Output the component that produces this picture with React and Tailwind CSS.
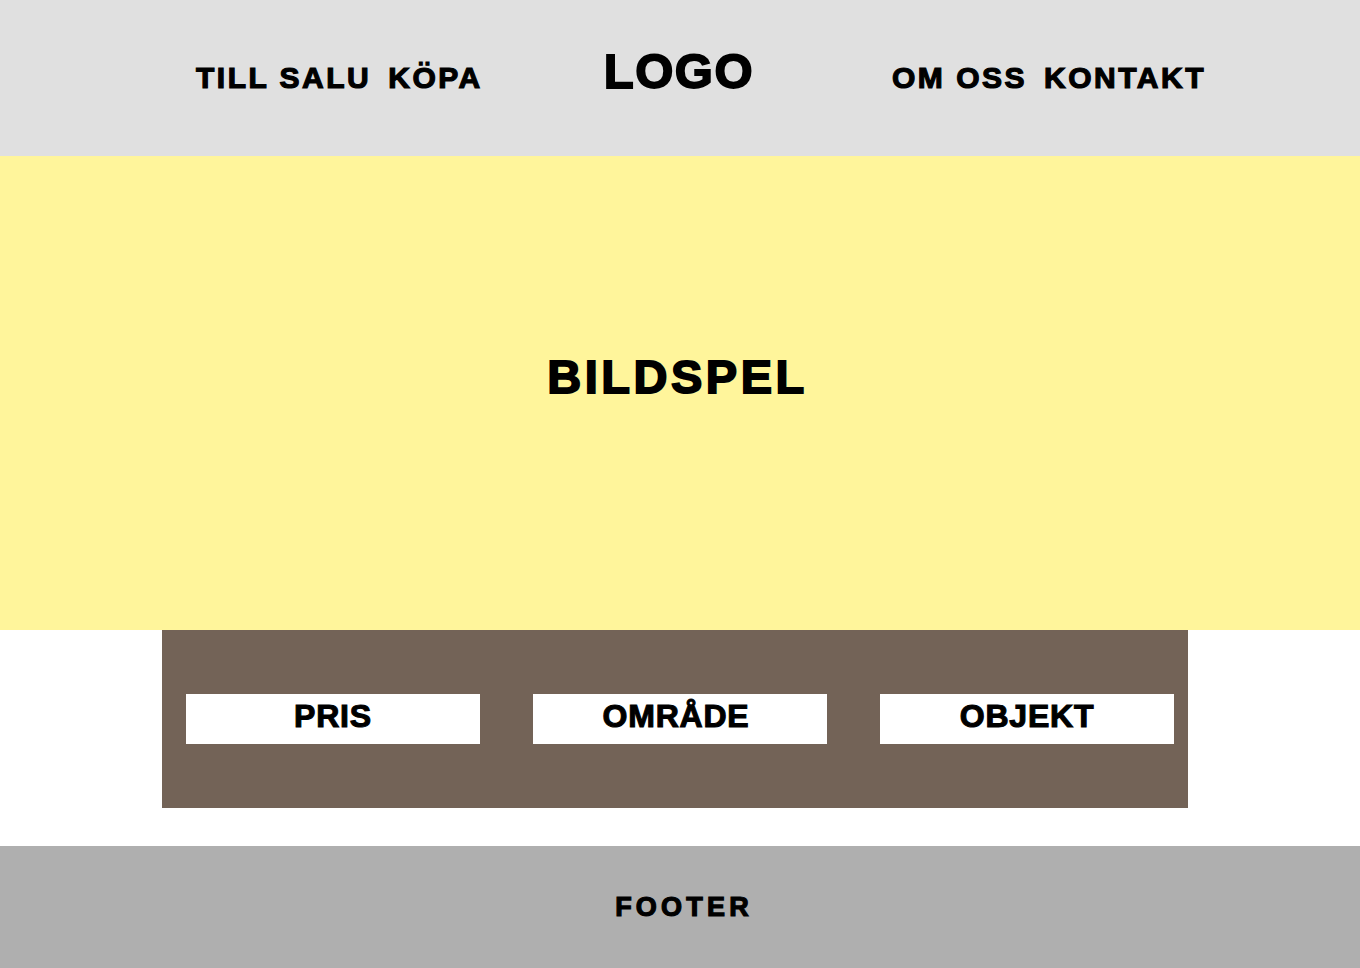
const font = "font-['Liberation_Sans',Arial,sans-serif] font-bold";

const leftLinks = ["TILL SALU", "KÖPA"];
const rightLinks = ["OM OSS", "KONTAKT"];
const filters = [
  { label: "PRIS", pad: "" },
  { label: "OMRÅDE", pad: "pr-[8px]" },
  { label: "OBJEKT", pad: "" },
];

export default function App() {
  return (
    <div className={`min-h-[968px] bg-white text-black ${font}`}>
      <header className="h-[156px] bg-[#e0e0e0] flex items-center">
        <nav className="ml-[196px] flex items-center gap-[17px] text-[30px] tracking-[2.5px] leading-none [-webkit-text-stroke:1.2px_black]">
          {leftLinks.map((l) => (
            <a key={l} href="#">
              {l}
            </a>
          ))}
        </nav>
        <a href="#" className="ml-[121px] mb-[14px] text-[49px] tracking-[1.5px] leading-none [-webkit-text-stroke:1.8px_black]">
          LOGO
        </a>
        <nav className="ml-[138px] flex items-center gap-[17px] text-[30px] tracking-[2.5px] leading-none [-webkit-text-stroke:1.2px_black]">
          {rightLinks.map((l) => (
            <a key={l} href="#">
              {l}
            </a>
          ))}
        </nav>
      </header>

      <section className="h-[474px] bg-[#fff59b] flex items-center justify-center">
        <h1 className="ml-[-5px] mb-[33px] text-[47px] tracking-[3.5px] leading-none [-webkit-text-stroke:1.8px_black]">
          BILDSPEL
        </h1>
      </section>

      <div className="mx-[162px] w-[1026px] h-[178px] bg-[#736357] flex items-center pl-[24px] gap-[53px]">
        {filters.map((f) => (
          <button
            key={f.label}
            className={`w-[294px] h-[50px] bg-white flex justify-center pt-[6px] text-[32px] tracking-[0.8px] leading-none [-webkit-text-stroke:1.1px_black] ${f.pad}`}
          >
            {f.label}
          </button>
        ))}
      </div>

      <footer className="mt-[38px] h-[122px] bg-[#afafaf] flex items-center justify-center">
        <span className="ml-[8px] mt-[1px] text-[27px] tracking-[4.2px] leading-none [-webkit-text-stroke:1.2px_black]">
          FOOTER
        </span>
      </footer>
    </div>
  );
}
